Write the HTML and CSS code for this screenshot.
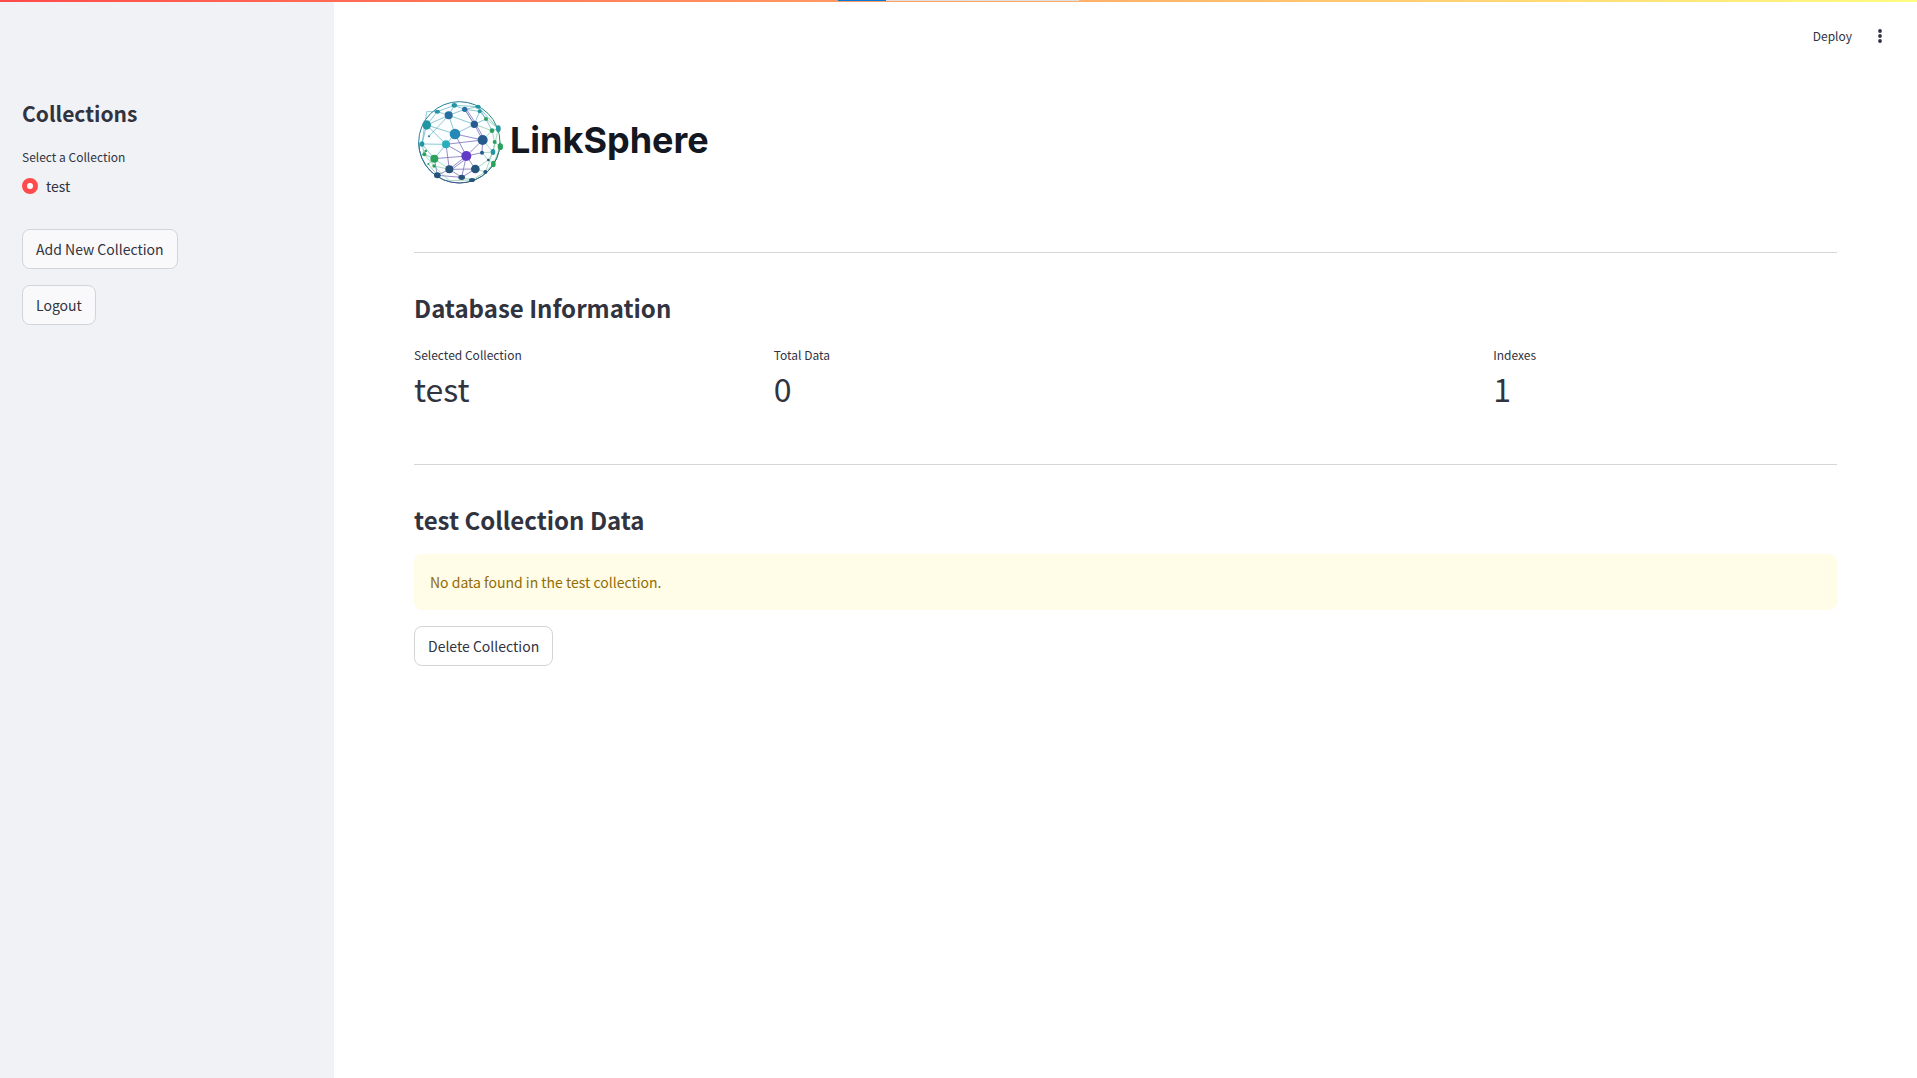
FILE: index.html
```html
<!DOCTYPE html>
<html lang="en">
<head>
<meta charset="utf-8">
<meta name="viewport" content="width=device-width, initial-scale=1">
<title>LinkSphere</title>
<link rel="stylesheet" href="styles.css">
</head>
<body>
<div class="decoration"><div class="loading"><span class="loading-value"></span></div></div>
<div class="app">
  <aside class="sidebar">
    <h2 class="sidebar-title">Collections</h2>
    <fieldset class="picker">
      <legend class="picker-label">Select a Collection</legend>
      <label class="option"><input class="radio" type="radio" name="collection" checked>test</label>
    </fieldset>
    <button class="button" type="button">Add New Collection</button>
    <button class="button" type="button">Logout</button>
  </aside>
  <div class="page">
    <header class="toolbar">
      <button class="tool" type="button">Deploy</button>
      <button class="tool" type="button" aria-label="Menu">
        <svg class="dots" viewBox="0 0 4 14" width="4" height="14" fill="#31333f"><circle cx="2" cy="2" r="1.9"/><circle cx="2" cy="7" r="1.9"/><circle cx="2" cy="12" r="1.9"/></svg>
      </button>
    </header>
    <main class="content">
      <div class="logo">
        <svg class="globe" viewBox="12 24 276 264" width="92" height="88" aria-hidden="true">
          <defs>
            <linearGradient id="rim" x1="0" y1="0" x2="1" y2="1"><stop offset="0" stop-color="#258fa8"/><stop offset=".3" stop-color="#277994"/><stop offset=".6" stop-color="#259b70"/><stop offset="1" stop-color="#27866f"/></linearGradient>
            <linearGradient id="base" x1="0" y1="0" x2="1" y2="0"><stop offset="0" stop-color="#267a9c"/><stop offset=".45" stop-color="#584a9c"/><stop offset="1" stop-color="#277e7c"/></linearGradient>
          </defs>
          <circle cx="148" cy="157" r="122" fill="#fcfeff" stroke="url(#rim)" stroke-width="3"/>
          <path d="M26 157A122 122 0 0 0 270 157" fill="none" stroke="url(#base)" stroke-width="3"/>
          <g fill="none" stroke="#45a2b6" stroke-width="1.8">
            <path d="M82 65L133 46L164 58L209 64L228 87L246 122L265 116M82 65L116 76L164 58L204 50M50 105L82 65M50 105L116 76L133 46M50 105L135 132L116 76L193 103L164 58M50 105L36 162L108 163L50 105M36 162L73 206L108 163L135 132L193 103L209 64M57 139L116 76M193 103L228 87L204 50M36 162L43 193L73 206M82 65L50 65L36 162M133 46L204 50L265 116"/>
          </g>
          <g fill="none" stroke="#7363b4" stroke-width="2.2">
            <path d="M108 163L218 150L135 132L169 198L218 150L193 103M198 104L224 149M108 163L169 198L73 206M108 163L118 238L169 198L196 237L118 238L155 262L169 198M123 240L174 202M169 198L216 188L218 150M196 237L155 262L82 256L118 238M73 206L82 256M164 58L193 103M170 59L199 103"/>
          </g>
          <g fill="none" stroke="#62b38b" stroke-width="1.6">
            <path d="M73 206L118 238L72 228L43 193M73 206L55 222L82 256M218 150L246 122L254 156L271 170L250 222L235 210L249 186L218 150M216 188L249 186L254 156M196 237L235 210L216 188M196 237L226 246L250 222M155 262L186 270L226 246M228 87L265 116L249 186L226 246M193 103L246 122M72 228L118 272L186 270"/>
          </g>
          <g fill="#2397a1"><ellipse cx="50" cy="105" rx="13" ry="14"/><ellipse cx="82" cy="65" rx="8" ry="6"/><ellipse cx="133" cy="46" rx="8" ry="7"/><ellipse cx="36" cy="162" rx="7" ry="8"/><ellipse cx="204" cy="50" rx="8" ry="6"/><circle cx="209" cy="64" r="6"/><ellipse cx="265" cy="116" rx="7" ry="10"/><ellipse cx="249" cy="186" rx="7" ry="9"/></g>
          <g fill="#266fa0"><circle cx="116" cy="76" r="12"/><circle cx="164" cy="58" r="8"/><circle cx="57" cy="139" r="3"/></g>
          <g fill="#275a8f"><circle cx="193" cy="103" r="11"/><circle cx="218" cy="150" r="15"/><circle cx="216" cy="188" r="6"/></g>
          <g fill="#265379"><circle cx="118" cy="238" r="12"/><circle cx="196" cy="237" r="13"/><ellipse cx="155" cy="262" rx="10" ry="8"/><ellipse cx="82" cy="256" rx="10" ry="9"/><ellipse cx="186" cy="270" rx="9" ry="6"/><circle cx="235" cy="210" r="4"/><circle cx="226" cy="246" r="6"/></g>
          <g fill="#2ba15c"><circle cx="73" cy="206" r="12"/><circle cx="228" cy="87" r="6"/><circle cx="246" cy="122" r="7"/><circle cx="254" cy="156" r="6"/><ellipse cx="271" cy="170" rx="8" ry="10"/><ellipse cx="250" cy="222" rx="7" ry="10"/><circle cx="72" cy="228" r="5"/><circle cx="55" cy="222" r="3"/><circle cx="43" cy="193" r="6"/><circle cx="47" cy="183" r="4"/></g>
          <circle cx="135" cy="132" r="16" fill="#2489b7"/>
          <circle cx="108" cy="163" r="12" fill="#27afbb"/>
          <circle cx="169" cy="198" r="15" fill="#633ac6"/>
        </svg>
        <span class="wordmark">LinkSphere</span>
      </div>
      <hr class="divider">
      <section class="section">
        <h2 class="heading">Database Information</h2>
        <dl class="metrics">
          <div class="metric"><dt class="metric-label">Selected Collection</dt><dd class="metric-value">test</dd></div>
          <div class="metric"><dt class="metric-label">Total Data</dt><dd class="metric-value">0</dd></div>
          <div class="metric metric-last"><dt class="metric-label">Indexes</dt><dd class="metric-value">1</dd></div>
        </dl>
      </section>
      <hr class="divider">
      <section class="section">
        <h2 class="heading">test Collection Data</h2>
        <p class="alert" role="alert">No data found in the test collection.</p>
        <button class="button" type="button">Delete Collection</button>
      </section>
    </main>
  </div>
</div>
</body>
</html>
```
FILE: styles.css
```css
* { box-sizing: border-box; }
body {
  margin: 0;
  background: #fff;
  color: #31333f;
  font-family: "Source Sans Pro", "Noto Sans CJK SC", sans-serif;
  font-size: 14px;
  line-height: 24px;
}
h2, p, dl, dd { margin: 0; }
.decoration {
  position: absolute;
  inset: 0 0 auto;
  height: 2px;
  background: linear-gradient(90deg, #ff4b4b, #fffd80);
}
.loading { width: 241px; height: 1px; margin: 0 auto; background: #e0e0e0; }
.loading-value { display: block; width: 20%; height: 1px; background: #0078d4; }
.app { display: flex; min-height: 100vh; }
.sidebar {
  display: flex;
  flex-direction: column;
  align-items: flex-start;
  gap: 16px;
  flex: 0 0 334px;
  padding: 96px 22px 24px;
  background: #f0f2f6;
}
.sidebar-title { font-size: 21px; line-height: 34px; font-weight: 600; }
.picker { margin: 0 0 15px; padding: 0; border: 0; }
.picker-label { padding: 0; font-size: 12px; line-height: 22px; margin-bottom: 6px; }
.option { display: flex; align-items: center; gap: 8px; }
.radio {
  appearance: none;
  width: 16px;
  height: 16px;
  margin: 0;
  border: 5px solid #ff4b4b;
  border-radius: 50%;
  background: #fff;
}
.button {
  height: 40px;
  padding: 0 13px;
  border: 1px solid #d3d4d8;
  border-radius: 8px;
  background: #fff;
  color: inherit;
  font: inherit;
}
.sidebar .button { background: #f9f9fb; }
.page { flex: 1; min-width: 0; }
.toolbar { display: flex; justify-content: flex-end; align-items: center; gap: 26px; height: 72px; padding: 0 35px; }
.tool { display: flex; padding: 0; border: 0; background: none; color: inherit; font: inherit; font-size: 12px; line-height: 24px; }
.content { padding: 24px 80px; }
.logo { display: flex; align-items: flex-start; gap: 4px; height: 124px; padding-top: 2px; }
.wordmark { font-family: Inter, sans-serif; font-size: 36px; line-height: 84px; font-weight: 700; color: #121722; }
.divider { margin: 32px 0; border: 0; border-top: 1px solid #d5d6d8; }
.heading { font-size: 24px; line-height: 46px; font-weight: 600; margin-bottom: 11px; }
.metrics { display: grid; grid-template-columns: repeat(4, 1fr); gap: 16px; padding-bottom: 24px; }
.metric-last { grid-column: 4; }
.metric-label { font-size: 12px; line-height: 26px; }
.metric-value { font-size: 32px; line-height: 40px; }
.alert { padding: 16px; margin-bottom: 16px; border-radius: 8px; background: #fffce7; color: #926c05; }
```
